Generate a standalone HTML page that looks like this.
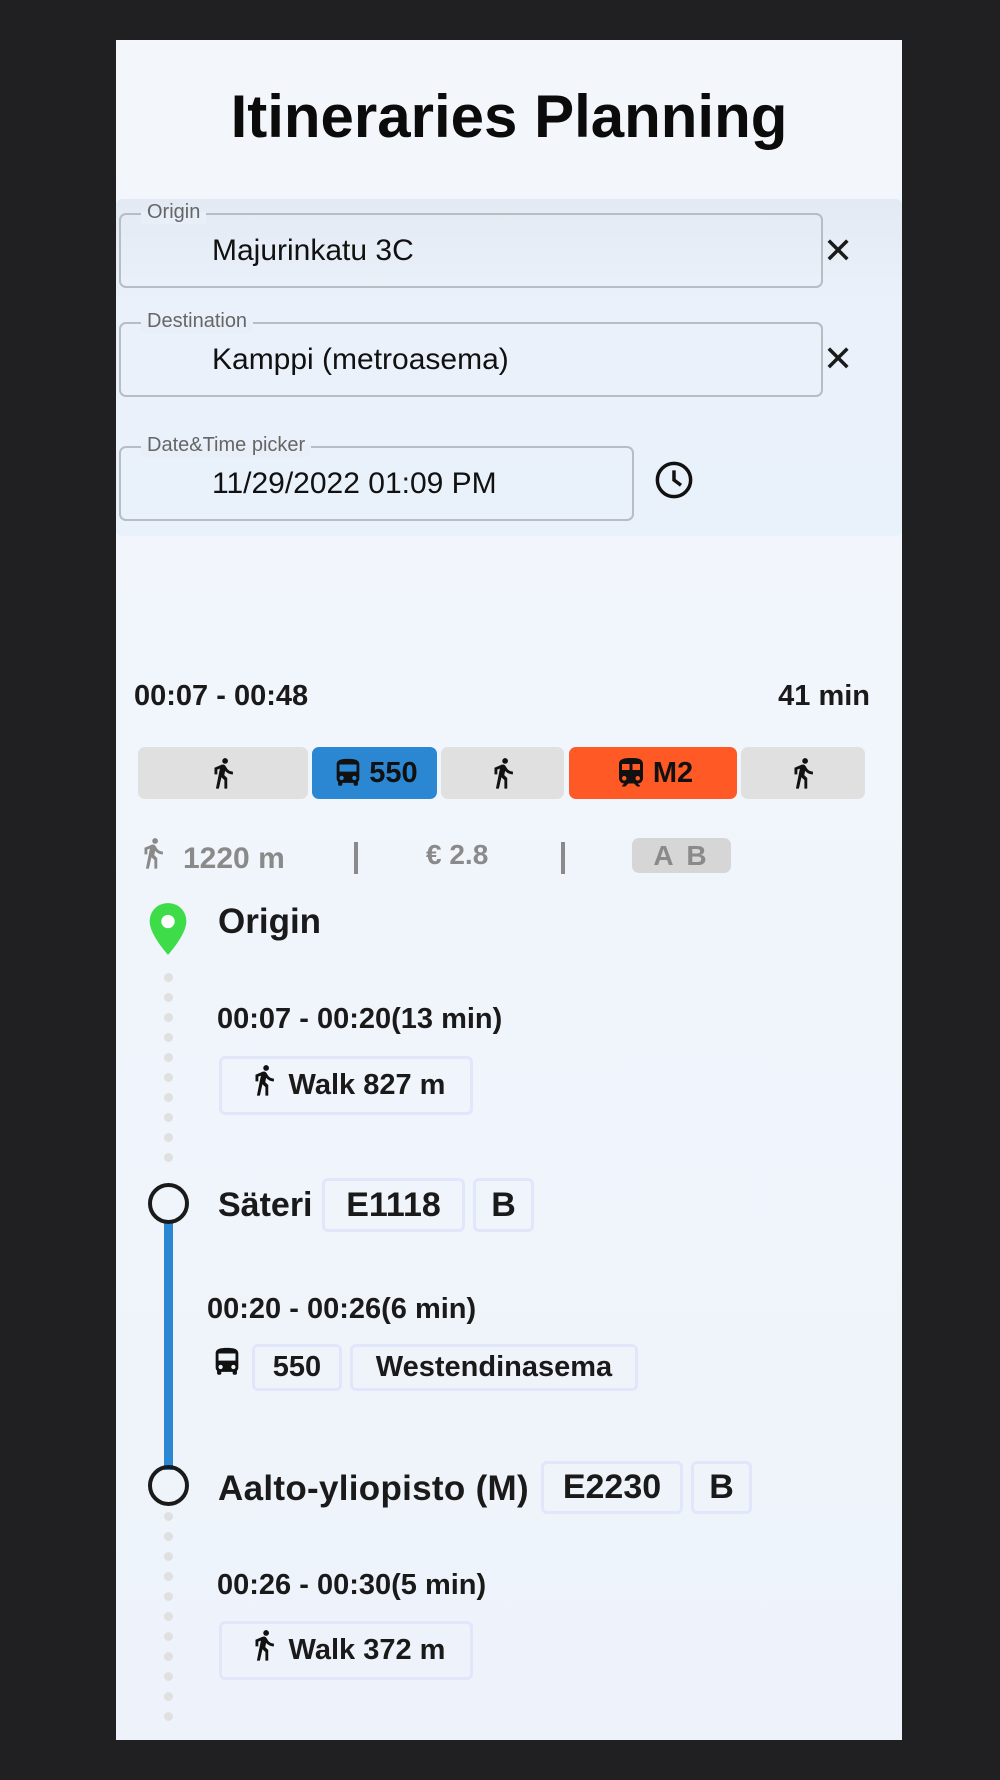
<!DOCTYPE html>
<html><head><meta charset="utf-8"><style>
*{margin:0;padding:0;box-sizing:border-box}
body{width:1000px;height:1780px;background:#202023;position:relative;overflow:hidden;font-family:"Liberation Sans",sans-serif;color:#1a1a1a}
.a{position:absolute}
#panel{left:116px;top:40px;width:786px;height:1700px;background:linear-gradient(180deg,#f3f7fc,#eef3fb)}
#form{left:116px;top:199px;width:786px;height:337px;background:linear-gradient(180deg,#e3eaf3,#eaf1fa 30%,#e9f1fb);border-radius:6px}
.fld{position:absolute;border:2px solid #b8bcc4;border-radius:7px}
.lbl{position:absolute;top:-14px;left:20px;padding:0 6px;font-size:20px;color:#666;background:linear-gradient(180deg,transparent 45%,#e8eff8 45%)}
.val{position:absolute;left:91px;font-size:30px;color:#111}
.b{font-weight:bold}
.seg{position:absolute;top:747px;height:52px;border-radius:7px;display:flex;align-items:center;justify-content:center;font-weight:bold;font-size:29px}
.bx{position:absolute;border:3px solid #e1e6fb;border-radius:6px;display:flex;align-items:center;justify-content:center;font-weight:bold}
.dot{position:absolute;left:164px;width:9px;height:9px;border-radius:50%;background:#e0e0e0}
svg{display:block}
</style></head><body>
<div class="a" id="panel"></div>
<div class="a b" style="left:116px;width:786px;top:82px;text-align:center;font-size:60px;color:#0b0b0b">Itineraries Planning</div>
<div class="a" id="form"></div>

<div class="fld" style="left:119px;top:213px;width:704px;height:75px"><span class="lbl">Origin</span><span class="val" style="top:19px">Majurinkatu 3C</span></div>
<div class="a" style="left:823px;top:230px;font-size:36px">✕</div>
<div class="fld" style="left:119px;top:322px;width:704px;height:75px"><span class="lbl">Destination</span><span class="val" style="top:19px">Kamppi (metroasema)</span></div>
<div class="a" style="left:823px;top:338px;font-size:36px">✕</div>
<div class="fld" style="left:119px;top:446px;width:515px;height:75px"><span class="lbl">Date&amp;Time picker</span><span class="val" style="top:19px">11/29/2022 01:09 PM</span></div>
<svg class="a" style="left:653px;top:459px" width="42" height="42" viewBox="0 0 24 24"><circle cx="12" cy="12" r="9.5" fill="none" stroke="#111" stroke-width="2"/><path d="M12 6.5V12l4 3" fill="none" stroke="#111" stroke-width="2"/></svg>

<div class="a b" style="left:134px;top:680px;font-size:29px">00:07 - 00:48</div>
<div class="a b" style="right:130px;top:680px;font-size:29px">41 min</div>

<div class="seg" style="left:138px;width:170px;background:#e0e0e0"><svg width="34" height="40" viewBox="0 0 24 24"><path fill="#111" d="M13.5 5.5c1.1 0 2-.9 2-2s-.9-2-2-2-2 .9-2 2 .9 2 2 2zM9.8 8.9L7 23h2.1l1.8-8 2.1 2v6h2v-7.5l-2.1-2 .6-3C14.8 12 16.8 13 19 13v-2c-1.9 0-3.5-1-4.3-2.4l-1-1.6c-.4-.6-1-1-1.7-1-.3 0-.5.1-.8.1L6 8.3V13h2V9.6l1.8-.7"/></svg></div>
<div class="seg" style="left:312px;width:125px;background:#2b87d1;color:#111"><svg width="34" height="36" viewBox="0 0 24 24"><path fill="#111" d="M4 16c0 .88.39 1.67 1 2.22V20c0 .55.45 1 1 1h1c.55 0 1-.45 1-1v-1h8v1c0 .55.45 1 1 1h1c.55 0 1-.45 1-1v-1.78c.61-.55 1-1.340 1-2.220V6c0-3.5-3.58-4-8-4s-8 .5-8 4v10zm3.5 1c-.83 0-1.5-.67-1.5-1.5S6.670 14 7.500 14s1.5.67 1.5 1.5S8.33 17 7.5 17zm9 0c-.83 0-1.5-.67-1.5-1.5s.67-1.5 1.5-1.5 1.5.67 1.5 1.5-.67 1.5-1.5 1.5zm1.5-6H6V6h12v5z"/></svg><span style="margin-left:4px">550</span></div>
<div class="seg" style="left:441px;width:123px;background:#e0e0e0"><svg width="34" height="40" viewBox="0 0 24 24"><path fill="#111" d="M13.5 5.5c1.1 0 2-.9 2-2s-.9-2-2-2-2 .9-2 2 .9 2 2 2zM9.8 8.9L7 23h2.1l1.8-8 2.1 2v6h2v-7.5l-2.1-2 .6-3C14.8 12 16.8 13 19 13v-2c-1.9 0-3.5-1-4.3-2.4l-1-1.6c-.4-.6-1-1-1.7-1-.3 0-.5.1-.8.1L6 8.3V13h2V9.6l1.8-.7"/></svg></div>
<div class="seg" style="left:569px;width:168px;background:#ff5a26;color:#111"><svg width="36" height="38" viewBox="0 0 24 24"><path fill="#111" d="M12 2c-4 0-8 .5-8 4v9.5C4 17.43 5.57 19 7.5 19L6 20.5v.5h2.23l2-2H14l2 2h2v-.5L16.5 19c1.93 0 3.5-1.57 3.5-3.5V6c0-3.5-3.58-4-8-4zM7.5 17c-.83 0-1.5-.67-1.5-1.5S6.67 14 7.5 14s1.5.67 1.5 1.5S8.33 17 7.5 17zm3.5-7H6V6h5v4zm2 0V6h5v4h-5zm3.5 7c-.83 0-1.5-.67-1.5-1.5s.67-1.5 1.5-1.5 1.5.67 1.5 1.5-.67 1.5-1.5 1.5z"/></svg><span style="margin-left:4px">M2</span></div>
<div class="seg" style="left:741px;width:124px;background:#e0e0e0"><svg width="34" height="40" viewBox="0 0 24 24"><path fill="#111" d="M13.5 5.5c1.1 0 2-.9 2-2s-.9-2-2-2-2 .9-2 2 .9 2 2 2zM9.8 8.9L7 23h2.1l1.8-8 2.1 2v6h2v-7.5l-2.1-2 .6-3C14.8 12 16.8 13 19 13v-2c-1.9 0-3.5-1-4.3-2.4l-1-1.6c-.4-.6-1-1-1.7-1-.3 0-.5.1-.8.1L6 8.3V13h2V9.6l1.8-.7"/></svg></div>

<svg class="a" style="left:136px;top:830px" width="34" height="46" viewBox="0 0 24 24"><path fill="#8a8a8a" d="M13.5 5.5c1.1 0 2-.9 2-2s-.9-2-2-2-2 .9-2 2 .9 2 2 2zM9.8 8.9L7 23h2.1l1.8-8 2.1 2v6h2v-7.5l-2.1-2 .6-3C14.8 12 16.8 13 19 13v-2c-1.9 0-3.5-1-4.3-2.4l-1-1.6c-.4-.6-1-1-1.7-1-.3 0-.5.1-.8.1L6 8.3V13h2V9.6l1.8-.7"/></svg>
<div class="a b" style="left:183px;top:842px;font-size:30px;color:#8a8a8a">1220 m</div>
<div class="a" style="left:354px;top:842px;width:4px;height:32px;background:#8a8a8a"></div>
<div class="a b" style="left:426px;top:839px;font-size:28px;color:#8a8a8a">€ 2.8</div>
<div class="a" style="left:561px;top:842px;width:4px;height:32px;background:#8a8a8a"></div>
<div class="a b" style="left:632px;top:838px;width:99px;height:35px;border-radius:7px;background:#d6d6d6;color:#8a8a8a;font-size:28px;text-align:center;line-height:35px;letter-spacing:3px">A B</div>

<svg class="a" style="left:148px;top:903px" width="40" height="52" viewBox="0 0 24 31"><path fill="#3ddc48" d="M12 0C5.4 0 1 5 1 11c0 8 11 20 11 20s11-12 11-20C23 5 18.6 0 12 0z"/><circle cx="12" cy="11" r="4" fill="#fff"/></svg>
<div class="a b" style="left:218px;top:902px;font-size:35px">Origin</div>

<div class="dot" style="top:973px"></div><div class="dot" style="top:993px"></div><div class="dot" style="top:1013px"></div><div class="dot" style="top:1033px"></div><div class="dot" style="top:1053px"></div><div class="dot" style="top:1073px"></div><div class="dot" style="top:1093px"></div><div class="dot" style="top:1113px"></div><div class="dot" style="top:1133px"></div><div class="dot" style="top:1153px"></div>

<div class="a b" style="left:217px;top:1003px;font-size:29px">00:07 - 00:20(13 min)</div>
<div class="bx" style="left:219px;top:1056px;width:254px;height:59px;font-size:29px"><svg width="34" height="44" viewBox="0 0 24 24" style="margin:-12px 8px 0 0"><path fill="#111" d="M13.5 5.5c1.1 0 2-.9 2-2s-.9-2-2-2-2 .9-2 2 .9 2 2 2zM9.8 8.9L7 23h2.1l1.8-8 2.1 2v6h2v-7.5l-2.1-2 .6-3C14.8 12 16.8 13 19 13v-2c-1.9 0-3.5-1-4.3-2.4l-1-1.6c-.4-.6-1-1-1.7-1-.3 0-.5.1-.8.1L6 8.3V13h2V9.6l1.8-.7"/></svg>Walk 827 m</div>

<div class="a" style="left:164px;top:1220px;width:9px;height:250px;background:#2b87d1"></div>
<div class="a" style="left:148px;top:1183px;width:41px;height:41px;border:4px solid #1a1a1a;border-radius:50%"></div>
<div class="a b" style="left:218px;top:1186px;font-size:34px">Säteri</div>
<div class="bx" style="left:322px;top:1178px;width:143px;height:54px;font-size:34px">E1118</div>
<div class="bx" style="left:473px;top:1178px;width:61px;height:54px;font-size:34px">B</div>

<div class="a b" style="left:207px;top:1293px;font-size:29px">00:20 - 00:26(6 min)</div>
<svg class="a" style="left:210px;top:1343px" width="34" height="38" viewBox="0 0 24 24"><path fill="#111" d="M4 16c0 .88.39 1.67 1 2.22V20c0 .55.45 1 1 1h1c.55 0 1-.45 1-1v-1h8v1c0 .55.45 1 1 1h1c.55 0 1-.45 1-1v-1.78c.61-.55 1-1.34 1-2.22V6c0-3.5-3.58-4-8-4s-8 .5-8 4v10zm3.5 1c-.83 0-1.5-.67-1.5-1.5S6.67 14 7.5 14s1.5.67 1.5 1.5S8.33 17 7.5 17zm9 0c-.83 0-1.5-.67-1.5-1.5s.67-1.5 1.5-1.5 1.5.67 1.5 1.5-.67 1.5-1.5 1.5zm1.5-6H6V6h12v5z"/></svg>
<div class="bx" style="left:252px;top:1344px;width:90px;height:47px;font-size:29px">550</div>
<div class="bx" style="left:350px;top:1344px;width:288px;height:47px;font-size:29px">Westendinasema</div>

<div class="a" style="left:148px;top:1465px;width:41px;height:41px;border:4px solid #1a1a1a;border-radius:50%"></div>
<div class="a b" style="left:218px;top:1469px;font-size:35px;letter-spacing:0.3px">Aalto-yliopisto (M)</div>
<div class="bx" style="left:541px;top:1461px;width:142px;height:53px;font-size:34px">E2230</div>
<div class="bx" style="left:691px;top:1461px;width:61px;height:53px;font-size:34px">B</div>

<div class="dot" style="top:1512px"></div><div class="dot" style="top:1532px"></div><div class="dot" style="top:1552px"></div><div class="dot" style="top:1572px"></div><div class="dot" style="top:1592px"></div><div class="dot" style="top:1612px"></div><div class="dot" style="top:1632px"></div><div class="dot" style="top:1652px"></div><div class="dot" style="top:1672px"></div><div class="dot" style="top:1692px"></div><div class="dot" style="top:1712px"></div>

<div class="a b" style="left:217px;top:1569px;font-size:29px">00:26 - 00:30(5 min)</div>
<div class="bx" style="left:219px;top:1621px;width:254px;height:59px;font-size:29px"><svg width="34" height="44" viewBox="0 0 24 24" style="margin:-12px 8px 0 0"><path fill="#111" d="M13.5 5.5c1.1 0 2-.9 2-2s-.9-2-2-2-2 .9-2 2 .9 2 2 2zM9.8 8.9L7 23h2.1l1.8-8 2.1 2v6h2v-7.5l-2.1-2 .6-3C14.8 12 16.8 13 19 13v-2c-1.9 0-3.5-1-4.3-2.4l-1-1.6c-.4-.6-1-1-1.7-1-.3 0-.5.1-.8.1L6 8.3V13h2V9.6l1.8-.7"/></svg>Walk 372 m</div>
</body></html>
